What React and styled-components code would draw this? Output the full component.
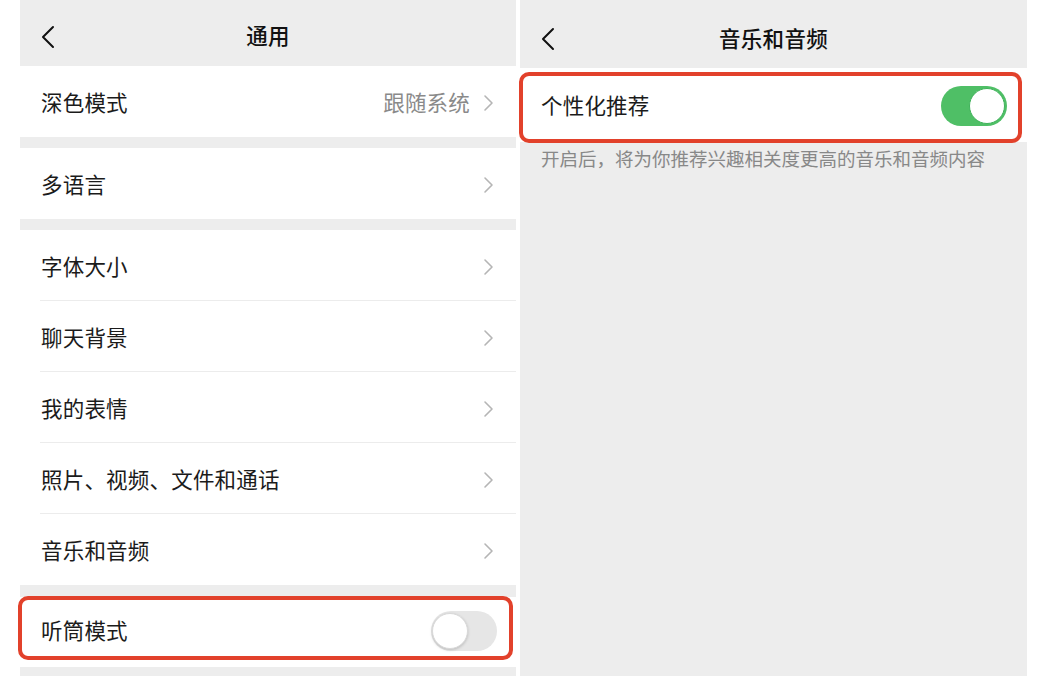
import React from "react";
import styled, { createGlobalStyle } from "styled-components";

const Global = createGlobalStyle`
  html, body { margin: 0; padding: 0; background: #ffffff; }
  body { font-family: "Noto Sans CJK SC", "Noto Sans", sans-serif; -webkit-font-smoothing: antialiased; }
`;

const Page = styled.div`
  display: flex;
  gap: 4px;
  padding-left: 20px;
  height: 676px;
  overflow: hidden;
`;

const Panel = styled.div`
  width: ${(p) => p.$w}px;
  height: 676px;
  background: #ededed;
  display: flex;
  flex-direction: column;
`;

const Header = styled.div`
  height: ${(p) => p.$h}px;
  position: relative;
  display: flex;
  align-items: center;
  justify-content: center;
  flex-shrink: 0;
`;

const Back = styled.div`
  position: absolute;
  left: 21px;
  top: ${(p) => p.$top}px;
  width: 14px;
  height: 24px;
  display: flex;
`;

const Title = styled.div`
  font-size: 21.5px;
  font-weight: 500;
  color: #111;
  letter-spacing: 0.3px;
  margin-top: ${(p) => p.$mt || 0}px;
`;

const Group = styled.div`
  background: #fff;
  margin-bottom: ${(p) => p.$mb || 0}px;
  display: flex;
  flex-direction: column;
`;

const Row = styled.div`
  position: relative;
  height: ${(p) => p.$h || 71}px;
  display: flex;
  align-items: center;
  padding: 0 21px;
  box-sizing: border-box;
  &:not(:last-child)::after {
    content: "";
    position: absolute;
    left: 20px;
    right: 0;
    bottom: 0;
    height: 1px;
    background: #ececec;
  }
`;

const Label = styled.div`
  flex: 1;
  font-size: 21.5px;
  color: #1b1b1b;
  letter-spacing: 0.2px;
  margin-top: ${(p) => p.$mt || 0}px;
`;

const Value = styled.div`
  font-size: 21.5px;
  color: #8a8a8a;
  margin-right: 13px;
  letter-spacing: 0.2px;
`;

const Chevron = styled.svg`
  width: 11px;
  height: 18px;
  margin-right: 1px;
  margin-top: 2px;
`;

const Toggle = styled.div`
  position: relative;
  width: 66px;
  height: 40px;
  border-radius: 20px;
  background: ${(p) => (p.$on ? "#4fbf66" : "#e6e6e6")};
  margin-right: ${(p) => p.$mr || 0}px;
  margin-top: ${(p) => p.$mt || 0}px;
  flex-shrink: 0;
`;

const Knob = styled.div`
  position: absolute;
  top: 2px;
  ${(p) => (p.$on ? "right: 2px;" : "left: 1px;")}
  width: 36px;
  height: 36px;
  border-radius: 50%;
  background: #fff;
  box-sizing: border-box;
  border: ${(p) => (p.$on ? "1.5px solid #3fb25a" : "1px solid #d9d9d9")};
  box-shadow: ${(p) => (p.$on ? "none" : "0 1px 3px rgba(0,0,0,0.18)")};
`;

const Highlight = styled.div`
  position: absolute;
  top: ${(p) => p.$t}px;
  left: ${(p) => p.$l}px;
  right: ${(p) => p.$r}px;
  bottom: ${(p) => p.$b}px;
  border: 4px solid #e2412b;
  border-radius: 10px;
  pointer-events: none;
`;

const Note = styled.div`
  padding: 3px 21px 0;
  font-size: 18.5px;
  color: #888;
  line-height: 26px;
`;

const Spacer = styled.div`
  flex: 1;
`;

const BackIcon = () => (
  <svg width="14" height="24" viewBox="0 0 14 24">
    <path d="M12 2 L2 12 L12 22" fill="none" stroke="#111" strokeWidth="2" strokeLinecap="round" strokeLinejoin="round" />
  </svg>
);

const Arrow = () => (
  <Chevron viewBox="0 0 11 18">
    <path d="M2 2 L9 9 L2 16" fill="none" stroke="#b5b5b5" strokeWidth="1.6" strokeLinecap="round" strokeLinejoin="round" />
  </Chevron>
);

const mainItems = ["字体大小", "聊天背景", "我的表情", "照片、视频、文件和通话", "音乐和音频"];

export default function App() {
  return (
    <>
      <Global />
      <Page>
        <Panel $w={496}>
          <Header $h={66}>
            <Back $top={25}><BackIcon /></Back>
            <Title $mt={2}>通用</Title>
          </Header>
          <Group $mb={11}>
            <Row>
              <Label>深色模式</Label>
              <Value>跟随系统</Value>
              <Arrow />
            </Row>
          </Group>
          <Group $mb={11}>
            <Row>
              <Label>多语言</Label>
              <Arrow />
            </Row>
          </Group>
          <Group $mb={12}>
            {mainItems.map((t) => (
              <Row key={t}>
                <Label>{t}</Label>
                <Arrow />
              </Row>
            ))}
          </Group>
          <Group>
            <Row $h={70}>
              <Label $mt={-5}>听筒模式</Label>
              <Toggle $mr={-2} $mt={-2}>
                <Knob />
              </Toggle>
              <Highlight $t={-1} $l={-2} $r={3} $b={7} />
            </Row>
          </Group>
        </Panel>
        <Panel $w={507}>
          <Header $h={68}>
            <Back $top={27}><BackIcon /></Back>
            <Title $mt={6}>音乐和音频</Title>
          </Header>
          <Group>
            <Row $h={74}>
              <Label $mt={-2}>个性化推荐</Label>
              <Toggle $on $mr={-1} $mt={2}>
                <Knob $on />
              </Toggle>
              <Highlight $t={4} $l={-1} $r={5} $b={-1} />
            </Row>
          </Group>
          <Note>开启后，将为你推荐兴趣相关度更高的音乐和音频内容</Note>
          <Spacer />
        </Panel>
      </Page>
    </>
  );
}
